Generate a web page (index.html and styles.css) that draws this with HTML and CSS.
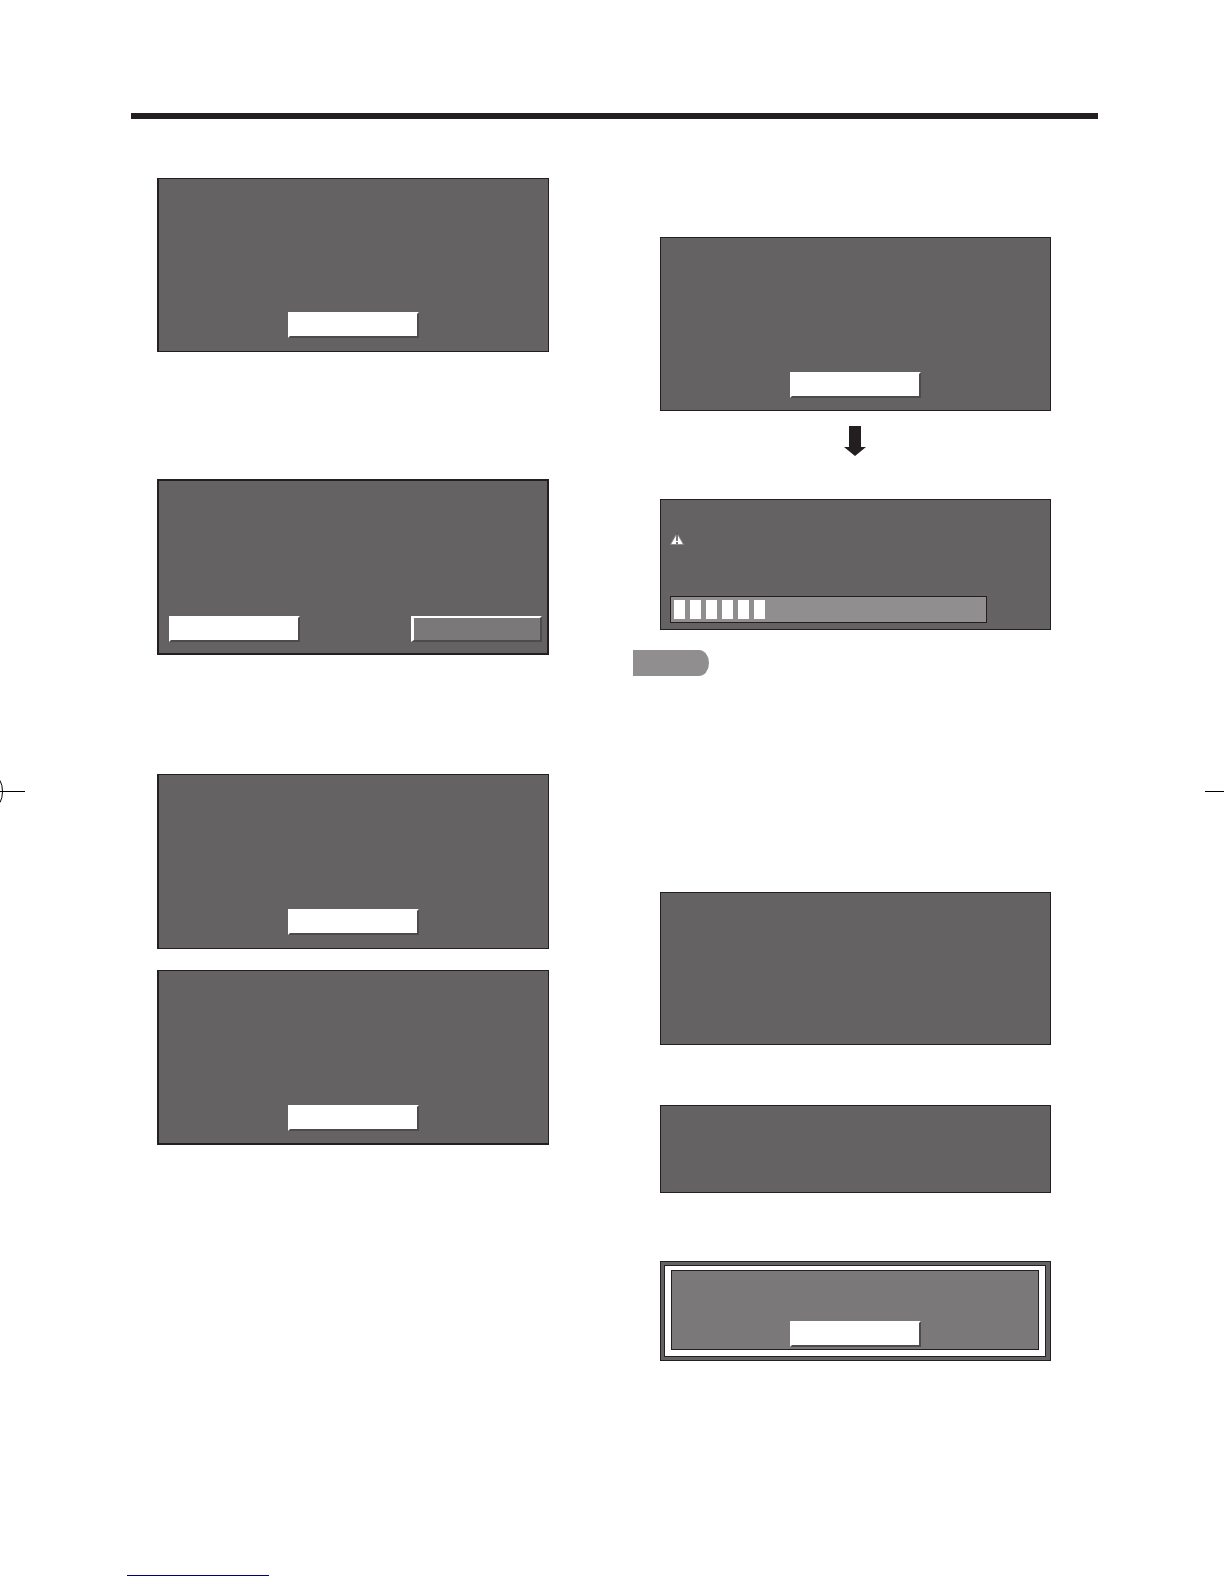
FILE: index.html
```html
<!DOCTYPE html>
<html lang="en">
<head>
<meta charset="utf-8">
<title>Software update</title>
<link rel="stylesheet" href="styles.css">
</head>
<body>
<div class="page">
  <svg class="mark mark-left" width="25" height="27" viewBox="0 0 25 27" aria-hidden="true">
    <path d="M0 13.5H25" stroke="#000" stroke-width="1"/>
    <path d="M0 2.500Q2.500 7 2.500 13.500T0 24.500" fill="none" stroke="#000" stroke-width="1"/>
  </svg>
  <svg class="mark mark-right" width="19" height="27" viewBox="0 0 19 27" aria-hidden="true">
    <path d="M0 13.5H19" stroke="#000" stroke-width="1"/>
  </svg>

  <hr class="rule">

  <main class="columns">
    <div class="column column-left">
      <section class="panel panel-message">
        <button class="key" type="button" aria-label="OK"></button>
      </section>
      <section class="panel panel-choice">
        <button class="key" type="button" aria-label="Yes"></button>
        <button class="key key-idle" type="button" aria-label="No"></button>
      </section>
      <section class="panel panel-message panel-result">
        <button class="key" type="button" aria-label="OK"></button>
      </section>
      <section class="panel panel-message panel-next">
        <button class="key" type="button" aria-label="OK"></button>
      </section>
    </div>

    <div class="column column-right">
      <section class="panel panel-message panel-start">
        <button class="key" type="button" aria-label="OK"></button>
      </section>
      <svg class="arrow" width="22" height="30" viewBox="0 0 22 30" aria-hidden="true">
        <path d="M5 0H17V21H22L11 30L0 21H5Z" fill="#231f20"/>
      </svg>
      <section class="panel panel-progress">
        <svg class="warning" width="14" height="14" viewBox="0 0 14 14" aria-hidden="true">
          <path d="M7 1L13.500 12.500H0.500Z" fill="#fff" stroke="#8b898a" stroke-width="1"/>
          <path d="M7 1V9M7 10V12" stroke="#4d4b4c" stroke-width="1.500"/>
        </svg>
        <div class="meter" role="progressbar" aria-label="Progress" aria-valuenow="30" aria-valuemin="0" aria-valuemax="100">
          <span class="tick"></span><span class="tick"></span><span class="tick"></span><span class="tick"></span><span class="tick"></span><span class="tick"></span>
        </div>
      </section>
      <div class="tag"></div>
      <section class="panel panel-tall"></section>
      <section class="panel panel-short"></section>
      <section class="panel panel-framed">
        <div class="frame">
          <div class="frame-inner">
            <button class="key" type="button" aria-label="OK"></button>
          </div>
        </div>
      </section>
    </div>
  </main>

  <footer class="footer"><a class="footer-link" href="#" aria-label="Home"></a></footer>
</div>
</body>
</html>
```

FILE: styles.css
```css
* {
  box-sizing: border-box;
}

body {
  margin: 0;
  background: #fff;
  font-family: "Liberation Sans", sans-serif;
}

.page {
  position: relative;
  display: flex;
  flex-direction: column;
  min-height: 100vh;
  padding-top: 113px;
  overflow: hidden;
}

.rule {
  align-self: stretch;
  height: 6px;
  margin: 0 126px 0 131px;
  border: 0;
  background: #231f20;
}

/* Print registration marks on the page edges */
.mark {
  position: absolute;
  top: calc(50% - 14px);
}

.mark-left {
  left: 0;
}

.mark-right {
  right: 0;
}

.columns {
  display: grid;
  grid-template-columns: 1fr 1fr;
  gap: 84px;
  padding: 59px 173px 0 131px;
}

.column {
  display: flex;
  flex-direction: column;
}

.column-left {
  padding-left: 26px;
}

.column-right {
  padding-top: 59px;
}

.column-right .panel {
  margin-left: 27px;
}

.panel {
  display: flex;
  border: 1px solid #231f20;
  background: #646263;
}

.column-left .panel {
  border-left-width: 2px;
}

.panel-message {
  align-items: flex-end;
  justify-content: center;
  min-height: 174px;
  padding-bottom: 13px;
}

.panel-choice {
  align-items: flex-end;
  justify-content: space-between;
  min-height: 176px;
  margin-top: 127px;
  padding: 0 5px 11px 10px;
  border-width: 2px;
}

.panel-result {
  min-height: 175px;
  margin-top: 119px;
}

.panel-next {
  min-height: 175px;
  margin-top: 21px;
  padding-bottom: 12px;
  border-bottom-width: 2px;
}

.panel-start {
  padding-bottom: 12px;
}

.key {
  width: 131px;
  height: 26px;
  padding: 0;
  border: 2px solid;
  border-color: #fff #4d4b4c #4d4b4c #fff;
  border-radius: 0;
  background: #fff;
}

.key-idle {
  border-left-width: 3px;
  background: #7a7879;
}

.arrow {
  align-self: center;
  margin: 15px 0 0 25px;
}

.panel-progress {
  flex-direction: column;
  justify-content: space-between;
  align-items: flex-start;
  min-height: 131px;
  margin-top: 43px;
  padding: 32px 9px 6px;
}

.meter {
  display: flex;
  gap: 5px;
  width: 317px;
  height: 27px;
  padding: 3px;
  border: 1px solid #231f20;
  background: #908e8f;
}

.tick {
  width: 11px;
  height: 19px;
  background: #fff;
}

.tag {
  width: 76px;
  height: 26px;
  margin-top: 20px;
  border-radius: 0 10px 10px 0 / 0 13px 13px 0;
  background: #908e8f;
}

.panel-tall {
  min-height: 153px;
  margin-top: 216px;
}

.panel-short {
  min-height: 88px;
  margin-top: 60px;
}

.panel-framed {
  min-height: 100px;
  margin-top: 68px;
  padding: 3px 4px 3px 3px;
}

.frame {
  display: flex;
  flex: 1;
  padding: 4px 6px 6px;
  border: 1px solid #231f20;
  background: #fff;
}

.frame-inner {
  display: flex;
  flex: 1;
  align-items: flex-end;
  justify-content: center;
  padding-bottom: 2px;
  border: 1px solid #231f20;
  background: #7a7879;
}

.footer {
  display: flex;
  margin-top: auto;
  padding: 0 0 8px 127px;
}

.footer-link {
  width: 142px;
  height: 18px;
  border-bottom: 1px solid #00007f;
}
```
